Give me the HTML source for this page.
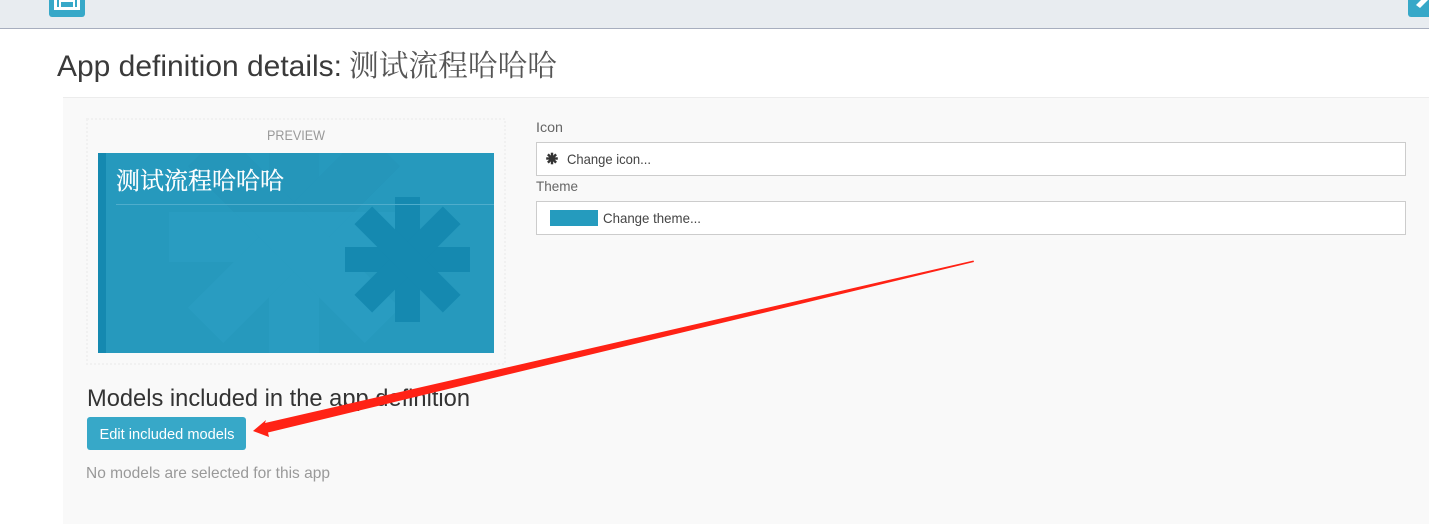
<!DOCTYPE html>
<html><head><meta charset="utf-8">
<style>
html,body{margin:0;padding:0;width:1429px;height:530px;overflow:hidden;background:#fff}
svg{display:block;position:absolute;left:0;top:0}
text{font-family:"Liberation Sans","Noto Sans CJK SC",sans-serif}
.cjk{font-family:"Liberation Serif","Noto Serif CJK SC",serif}
</style></head><body>
<svg width="1429" height="530" viewBox="0 0 1429 530" xmlns="http://www.w3.org/2000/svg">
<defs>
<clipPath id="cc"><rect x="98" y="153" width="396" height="200"/></clipPath>
<clipPath id="ct"><rect x="98" y="153" width="396" height="59"/></clipPath>
<g id="star">
<rect x="-25" y="-125" width="50" height="250"/>
<rect x="-125" y="-25" width="250" height="50"/>
<rect x="-25" y="-125" width="50" height="250" transform="rotate(45)"/>
<rect x="-25" y="-125" width="50" height="250" transform="rotate(-45)"/>
</g>
</defs>
<!-- top bar -->
<rect x="0" y="0" width="1429" height="28" fill="#e8ecf0"/>
<rect x="0" y="28" width="1429" height="1" fill="#a7aebe"/>
<path d="M49 0H85V14a3 3 0 0 1-3 3H52a3 3 0 0 1-3-3Z" fill="#37a8c8"/>
<path fill-rule="evenodd" d="M54 0H80V10H54ZM57 0V7H59V0ZM75 0V7H77V0ZM61 2V7H73V2Z" fill="#fff"/>
<path d="M1408 0H1429V17H1411a3 3 0 0 1-3-3Z" fill="#37a8c8"/>
<path d="M1416 5L1421 0H1428L1420 8Z" fill="#fff"/>
<!-- title -->
<text x="57" y="76" font-size="30" fill="#3a3a3a" textLength="285" lengthAdjust="spacingAndGlyphs">App definition details:</text>
<text class="cjk" x="349" y="76" font-size="30" fill="#555" textLength="208" lengthAdjust="spacingAndGlyphs">测试流程哈哈哈</text>
<!-- panel -->
<rect x="63" y="97" width="1366" height="427" fill="#f9f9f9"/>
<rect x="63" y="97" width="1366" height="1" fill="#ececec"/>
<rect x="87" y="119" width="418" height="245" fill="none" stroke="#f1f1f1" stroke-width="2" stroke-dasharray="2 2"/>
<text x="267" y="140" font-size="14" fill="#999" textLength="58" lengthAdjust="spacingAndGlyphs">PREVIEW</text>
<!-- card -->
<rect x="98" y="153" width="396" height="200" fill="#2699bd"/>
<g clip-path="url(#cc)">
<use href="#star" transform="translate(294 237)" fill="#299cc1"/>
</g>
<g clip-path="url(#ct)">
<use href="#star" transform="translate(294 237)" fill="#2596ba"/>
</g>
<g clip-path="url(#cc)">
<g fill="#1589b0" transform="translate(407.5 259.5)">
<rect x="-12.5" y="-62.5" width="25" height="125"/>
<rect x="-62.5" y="-12.5" width="125" height="25"/>
<rect x="-12.5" y="-62.5" width="25" height="125" transform="rotate(45)"/>
<rect x="-12.5" y="-62.5" width="25" height="125" transform="rotate(-45)"/>
</g>
</g>
<rect x="98" y="153" width="8" height="200" fill="#1589b0"/>
<rect x="116" y="204" width="378" height="1" fill="#4fadcc"/>
<text class="cjk" x="116" y="189" font-size="24" fill="#fff" stroke="#fff" stroke-width=".25" textLength="168" lengthAdjust="spacingAndGlyphs">测试流程哈哈哈</text>
<!-- form -->
<text x="536" y="132" font-size="14" fill="#666" textLength="27" lengthAdjust="spacingAndGlyphs">Icon</text>
<rect x="536.5" y="142.5" width="869" height="33" fill="#fff" stroke="#ccc"/>
<g fill="#333" transform="translate(552 158.500)">
<rect x="-1.200" y="-5.800" width="2.400" height="11.600"/>
<rect x="-5.800" y="-1.200" width="11.600" height="2.400"/>
<rect x="-1.200" y="-5.800" width="2.400" height="11.600" transform="rotate(45)"/>
<rect x="-1.200" y="-5.800" width="2.400" height="11.600" transform="rotate(-45)"/>
</g>
<text x="567" y="164" font-size="14" fill="#444" textLength="84" lengthAdjust="spacingAndGlyphs">Change icon...</text>
<text x="536" y="191" font-size="14" fill="#666" textLength="42" lengthAdjust="spacingAndGlyphs">Theme</text>
<rect x="536.5" y="201.500" width="869" height="33" fill="#fff" stroke="#ccc"/>
<rect x="550" y="210" width="48" height="16" fill="#259bbe"/>
<text x="603" y="223" font-size="14" fill="#444" textLength="98" lengthAdjust="spacingAndGlyphs">Change theme...</text>
<!-- models -->
<text x="87" y="406" font-size="24" fill="#333" textLength="383" lengthAdjust="spacingAndGlyphs">Models included in the app definition</text>
<rect x="87" y="417" width="159" height="33" rx="3" fill="#37a8c8"/>
<text x="99.500" y="439" font-size="15" fill="#fff" textLength="135" lengthAdjust="spacingAndGlyphs">Edit included models</text>
<text x="86" y="478" font-size="16" fill="#999" textLength="244" lengthAdjust="spacingAndGlyphs">No models are selected for this app</text>
<!-- arrow -->
<path d="M973.500 260.500L265 423L266 420L253 431L269 437L268 432.500L974 262Z" fill="#ff2215"/>
</svg>
</body></html>
